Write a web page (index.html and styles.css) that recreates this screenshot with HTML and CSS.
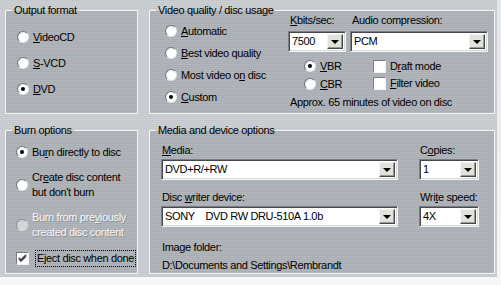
FILE: index.html
```html
<!DOCTYPE html>
<html lang="en">
<head>
  <meta charset="UTF-8" />
  <title>Disc options</title>
  <link rel="stylesheet" href="styles.css">
</head>
<body>
  <div class="dialog">

    <fieldset class="group output">
      <legend>Output format</legend>
      <div class="choices">
        <div class="radio"><span class="bullet"></span><span><u>V</u>ideoCD</span></div>
        <div class="radio"><span class="bullet"></span><span><u>S</u>-VCD</span></div>
        <div class="radio"><span class="bullet on"></span><span><u>D</u>VD</span></div>
      </div>
    </fieldset>

    <fieldset class="group quality">
      <legend>Video quality / disc usage</legend>
      <div class="quality-body">
        <div class="modes">
          <div class="radio"><span class="bullet"></span><span><u>A</u>utomatic</span></div>
          <div class="radio"><span class="bullet"></span><span><u>B</u>est video quality</span></div>
          <div class="radio"><span class="bullet"></span><span>Most video o<u>n</u> disc</span></div>
          <div class="radio"><span class="bullet on"></span><span><u>C</u>ustom</span></div>
        </div>
        <div class="encoding">
          <div class="field-label"><u>K</u>bits/sec:</div>
          <div class="field-label">Audio compression:</div>
          <div class="select"><span class="value">7500</span><span class="drop"></span></div>
          <div class="select"><span class="value">PCM</span><span class="drop"></span></div>
          <div class="stream-opts">
            <div class="radio"><span class="bullet on"></span><span><u>V</u>BR</span></div>
            <div class="radio"><span class="bullet"></span><span><u>C</u>BR</span></div>
          </div>
          <div class="filter-opts">
            <div class="check"><span class="box"></span><span>D<u>r</u>aft mode</span></div>
            <div class="check"><span class="box"></span><span><u>F</u>ilter video</span></div>
          </div>
          <p class="estimate">Approx. 65 minutes of video on disc</p>
        </div>
      </div>
    </fieldset>

    <fieldset class="group burn">
      <legend>Burn options</legend>
      <div class="choices">
        <div class="radio"><span class="bullet on"></span><span>Bu<u>r</u>n directly to disc</span></div>
        <div class="radio tall"><span class="bullet"></span><span>Cr<u>e</u>ate disc content<br>but don't burn</span></div>
        <div class="radio tall disabled"><span class="bullet"></span><span>Burn from pre<u>v</u>iously<br>created disc content</span></div>
        <div class="check"><span class="box">
          <svg width="9" height="9" viewBox="0 0 9 9"><path d="M1 3.5 L3 5.5 L8 0.5 M1 4.5 L3 6.5 L8 1.5 M1 5.5 L3 7.5 L8 2.5" stroke="#000" stroke-width="1" fill="none"/></svg>
        </span><span class="focus">Eject disc when done</span></div>
      </div>
    </fieldset>

    <fieldset class="group media">
      <legend>Media and device options</legend>
      <div class="media-body">
        <div class="field-label"><u>M</u>edia:</div>
        <div class="field-label">C<u>o</u>pies:</div>
        <div class="select"><span class="value">DVD+R/+RW</span><span class="drop"></span></div>
        <div class="select"><span class="value">1</span><span class="drop"></span></div>
        <div class="field-label spaced">Disc <u>w</u>riter device:</div>
        <div class="field-label spaced">Wri<u>t</u>e speed:</div>
        <div class="select"><span class="value">SONY    DVD RW DRU-510A 1.0b</span><span class="drop"></span></div>
        <div class="select"><span class="value">4X</span><span class="drop"></span></div>
        <div class="folder">
          <div>Image folder:</div>
          <div class="path">D:\Documents and Settings\Rembrandt</div>
        </div>
      </div>
    </fieldset>

  </div>
</body>
</html>
```

FILE: styles.css
```css
body {
  margin: 0;
  width: 501px;
  height: 285px;
  overflow: hidden;
  font-family: "Liberation Sans", Arial, sans-serif;
  font-size: 11px;
  letter-spacing: -0.35px;
  line-height: 13px;
  color: #000;
  background: linear-gradient(to bottom, #e4e5e7, #f7f7f7);
}

u {
  text-underline-offset: 1px;
}

.dialog {
  width: 497px;
  height: 277px;
  box-sizing: border-box;
  padding: 4px 0 0 5px;
  display: grid;
  grid-template-columns: 133px 346px;
  grid-template-rows: 110px 150px;
  column-gap: 11px;
  row-gap: 10px;
  background: repeating-linear-gradient(#c5c8cc 0 1px, #cdd0d3 1px 2px);
}

.group {
  margin: 0;
  padding: 0;
  min-width: 0;
  border: 1px solid #f4f5f6;
  background: repeating-linear-gradient(#a9aeb4 0 1px, #b2b6bb 1px 2px);
}

.group legend {
  margin-left: 6px;
  padding: 0 2px;
  line-height: 12px;
}

/* radios & checkboxes */
.radio,
.check {
  display: flex;
  align-items: center;
  gap: 4px;
  height: 16px;
  white-space: nowrap;
}

.radio.tall {
  height: 30px;
  line-height: 15px;
}

.bullet {
  flex: none;
  width: 12px;
  height: 12px;
  box-sizing: border-box;
  border-radius: 50%;
  border: 1px solid;
  border-color: #75797f #e9ebed #e9ebed #75797f;
  background: radial-gradient(circle at 60% 60%, #fff 45%, #d9dbde 100%);
  display: flex;
  align-items: center;
  justify-content: center;
}

.bullet.on::after {
  content: "";
  width: 4px;
  height: 4px;
  border-radius: 50%;
  background: #000;
}

.disabled {
  color: #f6f6f6;
  text-shadow: 1px 1px 0 #8b8f95;
}

.disabled .bullet {
  background: #d3d5d8;
  border-color: #8d9197 #d8dadc #d8dadc #8d9197;
}

.box {
  flex: none;
  width: 13px;
  height: 13px;
  box-sizing: border-box;
  border: 1px solid;
  border-color: #7b7f85 #f2f3f4 #f2f3f4 #7b7f85;
  background: #fff;
  display: flex;
  align-items: center;
  justify-content: center;
}

.focus {
  border: 1px dotted #000;
  padding: 1px;
  margin-left: 2px;
}

.field-label {
  white-space: nowrap;
}

/* combo boxes */
.select {
  display: flex;
  height: 21px;
  box-sizing: border-box;
  padding: 2px;
  background: #fff;
  border: 1px solid;
  border-color: #7b7f85 #f4f5f6 #f4f5f6 #7b7f85;
  box-shadow: inset 1px 1px 0 #45484c, inset -1px -1px 0 #d9d9d4;
}

.select .value {
  flex: 1;
  padding-left: 1px;
  line-height: 15px;
  white-space: pre;
  overflow: hidden;
}

.select .drop {
  flex: none;
  width: 16px;
  box-sizing: border-box;
  background: #e2e2dc;
  border: 1px solid;
  border-color: #f4f4f0 #45484c #45484c #f4f4f0;
  box-shadow: inset -1px -1px 0 #9a9a94;
  display: flex;
  align-items: center;
  justify-content: center;
}

.select .drop::after {
  content: "";
  border-left: 4px solid transparent;
  border-right: 4px solid transparent;
  border-top: 4px solid #000;
  margin-top: 1px;
}

/* output format */
.output .choices {
  display: flex;
  flex-direction: column;
  gap: 10px;
  padding: 13px 0 0 11px;
}

/* video quality */
.quality-body {
  display: flex;
  padding-left: 15px;
}

.modes {
  width: 123px;
  display: flex;
  flex-direction: column;
  gap: 6px;
  padding-top: 7px;
}

.encoding {
  display: grid;
  grid-template-columns: 58px 138px;
  column-gap: 4px;
  margin-top: -2px;
}

.encoding .field-label {
  padding-left: 2px;
  margin-bottom: 4px;
}

.stream-opts,
.filter-opts {
  display: flex;
  flex-direction: column;
  gap: 2px;
  margin-top: 6px;
}

.stream-opts {
  padding-left: 16px;
}

.filter-opts {
  padding-left: 23px;
  gap: 1px;
}

.estimate {
  grid-column: 1 / 3;
  margin: 4px 0 0 2px;
  white-space: nowrap;
}

/* burn options */
.burn .choices {
  display: flex;
  flex-direction: column;
  gap: 10px;
  padding: 8px 0 0 10px;
}

/* media and device */
.media-body {
  display: grid;
  grid-template-columns: 237px 60px;
  column-gap: 21px;
  padding: 8px 0 0 11px;
}

.media-body .field-label {
  padding-left: 1px;
  margin-bottom: 2px;
}

.media-body .field-label.spaced {
  margin-top: 11px;
}

.folder {
  grid-column: 1 / 3;
  margin-top: 14px;
  padding-left: 1px;
  display: flex;
  flex-direction: column;
  gap: 5px;
}
```
